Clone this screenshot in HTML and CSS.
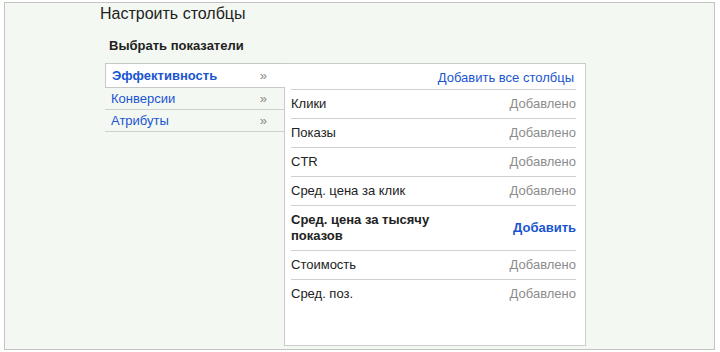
FILE: index.html
```html
<!DOCTYPE html>
<html lang="ru">
<head>
    <meta charset="UTF-8">
    <title>Настроить столбцы</title>
    <link rel="stylesheet" href="styles.css">
</head>
<body>
    <div class="dialog">
        <h1>Настроить столбцы</h1>
        <h2>Выбрать показатели</h2>
        <div class="picker">
            <div class="tabs">
                <div class="tab active"><span>Эффективность</span><span class="chev">&raquo;</span></div>
                <div class="tab"><span>Конверсии</span><span class="chev">&raquo;</span></div>
                <div class="tab"><span>Атрибуты</span><span class="chev">&raquo;</span></div>
            </div>
            <div class="panel">
                <div class="panel-head"><a href="#">Добавить все столбцы</a></div>
                <div class="row"><span class="name">Клики</span><span class="added">Добавлено</span></div>
                <div class="row"><span class="name">Показы</span><span class="added">Добавлено</span></div>
                <div class="row"><span class="name">CTR</span><span class="added">Добавлено</span></div>
                <div class="row"><span class="name">Сред. цена за клик</span><span class="added">Добавлено</span></div>
                <div class="row new"><span class="name">Сред. цена за тысячу показов</span><a href="#" class="add">Добавить</a></div>
                <div class="row"><span class="name">Стоимость</span><span class="added">Добавлено</span></div>
                <div class="row"><span class="name">Сред. поз.</span><span class="added">Добавлено</span></div>
            </div>
        </div>
    </div>
</body>
</html>
```

FILE: styles.css
```css
body {
    margin: 0;
    background: #fff;
    font-family: 'Liberation Sans', Arial, sans-serif;
    font-size: 13px;
    color: #222;
}
a {
    color: #1a55d0;
    text-decoration: none;
}
.dialog {
    margin: 2px 0 0 4px;
    width: 709px;
    height: 346px;
    border: 1px solid #c2c4c2;
    background: #f4f8f3;
}
h1 {
    margin: 2px 0 0 95px;
    font-size: 16px;
    font-weight: normal;
    line-height: 18px;
    color: #222;
}
h2 {
    margin: 15px 0 0 104px;
    font-size: 13px;
    font-weight: bold;
    line-height: 16px;
    color: #222;
}
.picker {
    display: flex;
    align-items: flex-start;
    margin: 9px 0 0 100px;
}
.tabs {
    width: 179px;
    flex: none;
}
.tab {
    display: flex;
    justify-content: space-between;
    height: 21px;
    line-height: 21px;
    padding: 0 17px 0 6px;
    border-bottom: 1px solid #d0d0d0;
    color: #1a55d0;
}
.tab.active {
    height: 23px;
    line-height: 23px;
    border: 1px solid #c8c8c8;
    border-right: none;
    margin-right: -1px;
    padding-right: 18px;
    background: #fff;
    font-weight: bold;
    position: relative;
    z-index: 1;
}
.chev {
    color: #8a8a8a;
    font-size: 13px;
    font-weight: normal;
}
.panel {
    width: 285px;
    height: 281px;
    padding: 0 9px 0 6px;
    border: 1px solid #cbcbcb;
    background: #fff;
}
.panel-head {
    height: 23px;
    padding: 2px 2px 0 0;
    line-height: 23px;
    text-align: right;
    border-bottom: 1px solid #d0d0d0;
}
.row {
    display: flex;
    align-items: center;
    justify-content: space-between;
    min-height: 16px;
    padding: 6px 0;
    line-height: 16px;
    border-bottom: 1px solid #d0d0d0;
}
.row:last-child {
    border-bottom: none;
}
.name {
    max-width: 180px;
}
.added {
    color: #8c8c8c;
}
.row.new .name,
.add {
    font-weight: bold;
}
```
